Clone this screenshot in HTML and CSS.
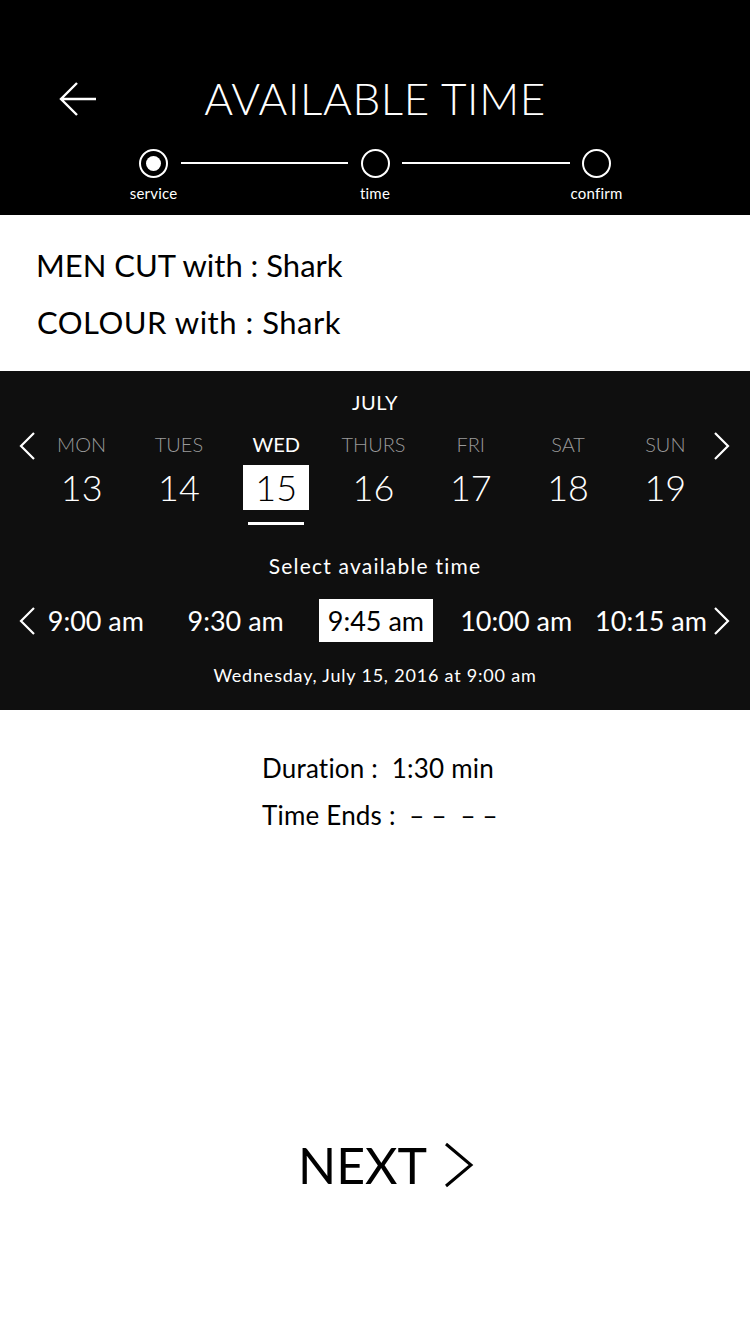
FILE: index.html
```html
<!DOCTYPE html>
<html>
<head>
<meta charset="utf-8">
<link rel="stylesheet" href="styles.css">
</head>
<body>
<div class="page">
  <header class="header">
    <div class="title-row">
      <div class="back">
        <svg width="38" height="34" viewBox="0 0 38 34"><path d="M37 17H2M18 1L2 17l16 16" fill="none" stroke="#fff" stroke-width="2.4"/></svg>
      </div>
      <h1 class="title">AVAILABLE TIME</h1>
      <div></div>
    </div>
    <div class="steps">
      <div class="step"><span class="circle active"></span><span class="step-label">service</span></div>
      <div class="line"></div>
      <div class="step"><span class="circle"></span><span class="step-label">time</span></div>
      <div class="line"></div>
      <div class="step"><span class="circle"></span><span class="step-label">confirm</span></div>
    </div>
  </header>

  <section class="services">
    <p class="service">MEN CUT with : Shark</p>
    <p class="service service-2">COLOUR with : Shark</p>
  </section>

  <section class="picker">
    <div class="month">JULY</div>
    <div class="week">
      <div class="chev"><svg width="16" height="28" viewBox="0 0 16 28"><path d="M15 1L2 14l13 13" fill="none" stroke="#fff" stroke-width="2.2"/></svg></div>
      <div class="days">
        <div class="day"><span class="dname">MON</span><span class="dnum">13</span></div>
        <div class="day"><span class="dname">TUES</span><span class="dnum">14</span></div>
        <div class="day selected"><span class="dname">WED</span><span class="dnum">15</span><span class="underline"></span></div>
        <div class="day"><span class="dname">THURS</span><span class="dnum">16</span></div>
        <div class="day"><span class="dname">FRI</span><span class="dnum">17</span></div>
        <div class="day"><span class="dname">SAT</span><span class="dnum">18</span></div>
        <div class="day"><span class="dname">SUN</span><span class="dnum">19</span></div>
      </div>
      <div class="chev"><svg width="16" height="28" viewBox="0 0 16 28"><path d="M1 1l13 13L1 27" fill="none" stroke="#fff" stroke-width="2.2"/></svg></div>
    </div>
    <div class="select-label">Select available time</div>
    <div class="times">
      <div class="chev"><svg width="16" height="28" viewBox="0 0 16 28"><path d="M15 1L2 14l13 13" fill="none" stroke="#fff" stroke-width="2.2"/></svg></div>
      <div class="slot s1"><span class="time">9:00 am</span></div>
      <div class="slot s2"><span class="time">9:30 am</span></div>
      <div class="slot s3"><span class="time selected">9:45 am</span></div>
      <div class="slot s4"><span class="time">10:00 am</span></div>
      <div class="slot s5"><span class="time">10:15 am</span></div>
      <div class="chev chev-r"><svg width="16" height="28" viewBox="0 0 16 28"><path d="M1 1l13 13L1 27" fill="none" stroke="#fff" stroke-width="2.2"/></svg></div>
    </div>
    <div class="summary">Wednesday, July 15, 2016 at 9:00 am</div>
  </section>

  <section class="details">
    <div class="detail">Duration :&nbsp; 1:30 min</div>
    <div class="detail">Time Ends :&nbsp; – –&nbsp; – –</div>
  </section>

  <div class="next">
    <span class="next-text">NEXT</span>
    <svg width="30" height="46" viewBox="0 0 30 46"><path d="M2 2l25 21L2 44" fill="none" stroke="#000" stroke-width="3"/></svg>
  </div>
</div>
</body>
</html>
```

FILE: styles.css
```css
* { box-sizing: border-box; margin: 0; padding: 0; }
html, body { background: #fff; }
body { font-family: "Lato", "DejaVu Sans", sans-serif; color: #000; }
.page { width: 750px; height: 1334px; display: flex; flex-direction: column; }

.header { background: #000; height: 215px; color: #fff; padding-top: 70px; }
.title-row { display: grid; grid-template-columns: 1fr auto 1fr; align-items: center; height: 56px; }
.back { padding-left: 59px; display: flex; align-items: center; padding-top: 2px; }
.title { font-weight: 300; font-size: 44px; letter-spacing: 0.6px; line-height: 56px; }

.steps { width: 523px; margin: 23px auto 0; display: flex; align-items: flex-start; }
.step { width: 80px; display: flex; flex-direction: column; align-items: center; }
.circle { width: 29px; height: 29px; border: 2.5px solid #fff; border-radius: 50%; display: flex; align-items: center; justify-content: center; }
.circle.active::after { content: ""; width: 15px; height: 15px; border-radius: 50%; background: #fff; }
.step-label { font-size: 15px; line-height: 18px; margin-top: 6px; letter-spacing: 0.2px; }
.line { flex: 1; height: 2px; background: #fff; margin: 13px -13px 0; }

.services { padding: 28px 0 0 36px; height: 156px; }
.service { font-size: 31px; line-height: 44px; }
.service-2 { margin-top: 13px; padding-left: 1px; letter-spacing: 0.5px; }

.picker { background: #0f0f0f; height: 339px; color: #fff; padding-top: 18px; }
.month { text-align: center; font-size: 20px; line-height: 26px; letter-spacing: 0.5px; }
.week { display: flex; align-items: flex-start; margin-top: 16px; padding: 0 19px; }
.week .chev { padding-top: 1px; width: 17px; }
.days { flex: 1; display: flex; margin-left: -3px; }
.day { flex: 1; display: flex; flex-direction: column; align-items: center; }
.dname { font-size: 20px; line-height: 26px; color: #9a9a9a; font-weight: 300; }
.day.selected .dname { color: #fff; font-weight: 400; }
.dnum { font-size: 36px; line-height: 45px; margin-top: 8px; padding: 0 10px; font-weight: 300; }
.day.selected .dnum { background: #fff; color: #000; width: 66px; text-align: center; padding: 0; }
.underline { width: 56px; height: 3px; background: #fff; margin-top: 12px; }

.select-label { text-align: center; font-size: 21px; line-height: 26px; margin-top: 28px; letter-spacing: 1.2px; }
.times { display: flex; align-items: center; margin-top: 20px; padding: 0 19px; height: 43px; }
.times .chev { width: 17px; display: flex; }
.times .chev-r { margin-left: 8px; }
.slot { display: flex; justify-content: center; }
.s1 { width: 120px; }
.s2 { width: 160px; }
.s3 { width: 121px; }
.s4 { width: 160px; }
.s5 { width: 110px; }
.time { font-size: 27px; line-height: 43px; white-space: nowrap; }
.time.selected { background: #fff; color: #000; padding: 0 9px; }
.summary { text-align: center; font-size: 18px; line-height: 24px; margin-top: 21px; letter-spacing: 0.8px; }

.details { padding: 41px 0 0 262px; }
.detail { font-size: 26px; line-height: 34px; margin-bottom: 13px; letter-spacing: 0.2px; }

.next { margin-top: 290px; display: flex; align-items: center; justify-content: center; gap: 17px; padding-left: 22px; }
.next-text { font-size: 50px; line-height: 60px; font-weight: 400; }
```
